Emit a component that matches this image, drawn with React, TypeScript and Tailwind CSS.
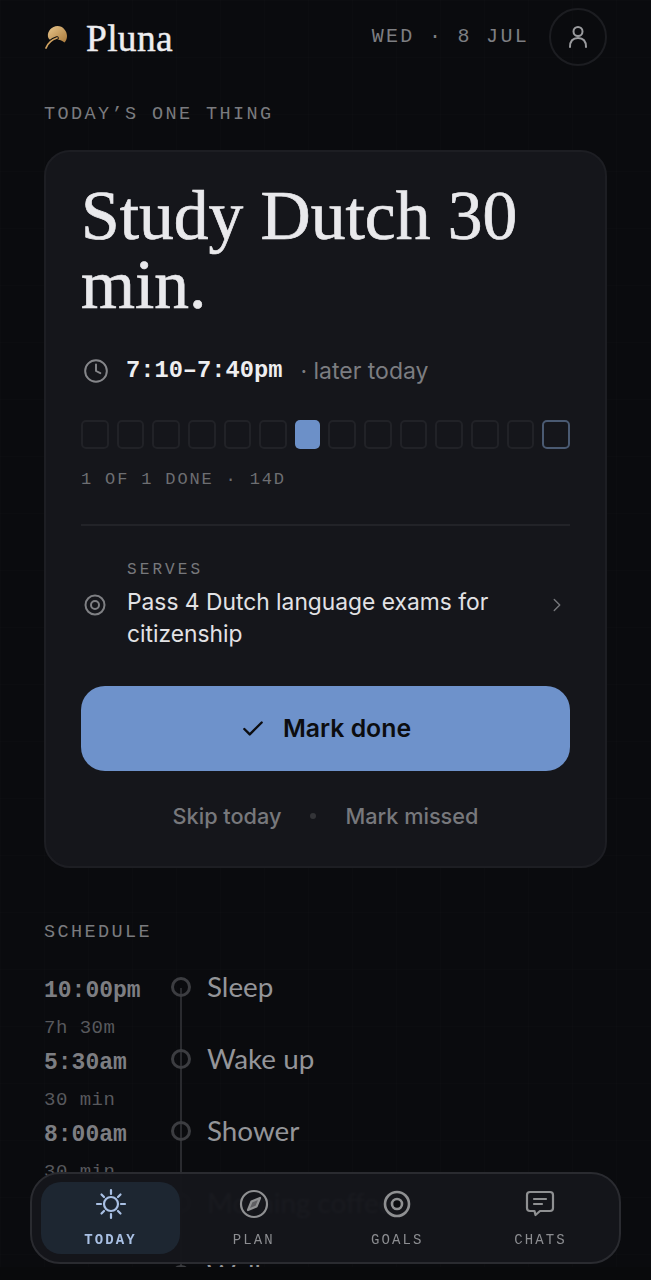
import React from 'react'
import { Check, ChevronRight, Clock } from 'lucide-react'

const sans = "font-['Lato',_'Noto_Sans',sans-serif]"
const inter = "font-['Inter',sans-serif]"
const mono = "font-['Liberation_Mono',monospace]"

const schedule = [
  { time: '10:00pm', dur: '7h 30m', name: 'Sleep' },
  { time: '5:30am', dur: '30 min', name: 'Wake up' },
  { time: '8:00am', dur: '30 min', name: 'Shower' },
  { time: '8:30am', dur: '30 min', name: 'Morning coffee' },
  { time: '9:00am', dur: '30 min', name: 'Walk' },
]

const SunIcon = () => (
  <svg width="32" height="32" viewBox="0 0 32 32" fill="none" stroke="#a9c0e4" strokeWidth="2.200" strokeLinecap="round">
    <circle cx="16" cy="16" r="7" />
    <path d="M16 2v4M16 26v4M2 16h4M26 16h4M6.500 6.500l2.500 2.500M23 23l2.500 2.500M6.500 25.500L9 23M23 9l2.500-2.500" />
  </svg>
)

const CompassIcon = () => (
  <svg width="30" height="30" viewBox="0 0 30 30" fill="none" stroke="#8f9092" strokeWidth="2.200">
    <circle cx="15" cy="15" r="13" />
    <path d="M21 9l-3.500 8.500L9 21l3.500-8.500z" fill="#8f9092" fillOpacity="0.6" strokeLinejoin="round" />
  </svg>
)

const SmallTarget = () => (
  <svg width="22" height="22" viewBox="0 0 22 22" fill="none" stroke="#7f8084" strokeWidth="2">
    <circle cx="11" cy="11" r="9.500" />
    <circle cx="11" cy="11" r="4" />
  </svg>
)

const NavTarget = () => (
  <svg width="28" height="28" viewBox="0 0 28 28" fill="none" stroke="#8f9092" strokeWidth="2.600">
    <circle cx="14" cy="14" r="12" />
    <circle cx="14" cy="14" r="5" fill="#0b0c0f" />
  </svg>
)

const ChatIcon = () => (
  <svg width="30" height="28" viewBox="0 0 30 28" fill="none" stroke="#8f9092" strokeWidth="2.200" strokeLinecap="round" strokeLinejoin="round">
    <path d="M5 2h20a3 3 0 0 1 3 3v13a3 3 0 0 1-3 3H15l-4.500 4-1-4H5a3 3 0 0 1-3-3V5a3 3 0 0 1 3-3z" />
    <path d="M9 9h12M9 14h8" />
  </svg>
)

const Logo = () => (
  <svg width="24" height="26" viewBox="0 0 24 26">
    <defs>
      <linearGradient id="leaf" x1="0" y1="0" x2="1" y2="1">
        <stop offset="0" stopColor="#e8c68c" />
        <stop offset="1" stopColor="#a9793a" />
      </linearGradient>
    </defs>
    <path d="M4 13C3 7 8 2 13.500 2S23 7 23 12c0 3-1 5-2.500 6.500C17 15 12 15 9 16c-2 .5-4 0-5-3z" fill="url(#leaf)" />
    <path d="M2 24c1.500-4 5-8 11-10" fill="none" stroke="#0a0b0e" strokeWidth="3.500" strokeLinecap="round" />
    <path d="M2 24c1.500-4 5-8 11-10" fill="none" stroke="#d0a260" strokeWidth="1.800" strokeLinecap="round" />
  </svg>
)

const NavItem = ({ icon, label, active }: { icon: React.ReactNode; label: string; active?: boolean }) => (
  <div
    className={`flex h-[72px] w-[139px] flex-col items-center justify-center rounded-[20px] ${
      active ? 'bg-[#1e2733]/95' : ''
    }`}
  >
    <div className="flex h-[32px] items-center justify-center">{icon}</div>
    <div
      className={`${mono} mt-[12px] text-[14px] leading-[16px] tracking-[2.100px] ${
        active ? 'font-bold text-[#a9c0e4]' : 'text-[#8c8d91]'
      }`}
    >
      {label}
    </div>
  </div>
)

const App = () => {
  const days = Array.from({ length: 14 }, (_, i) => i)

  return (
    <div
      className={`relative h-[1280px] w-[651px] overflow-hidden bg-[#0a0b0e] bg-[linear-gradient(rgba(255,255,255,0.008)_1px,transparent_1px),linear-gradient(90deg,rgba(255,255,255,0.008)_1px,transparent_1px)] bg-[size:44px_57px] ${sans}`}
    >
      <div className="px-[44px]">
        <header className="flex h-[72px] items-center justify-between pt-[1px]">
          <div className="flex items-center">
            <Logo />
            <span className="ml-[18px] mt-[4px] font-['Liberation_Serif',serif] text-[37.500px] leading-[40px] tracking-[0.3px] text-[#eeeef0] [-webkit-text-stroke:0.4px_#eeeef0]">
              Pluna
            </span>
          </div>
          <div className="flex items-center">
            <span className={`${mono} text-[20px] leading-[24px] tracking-[2.300px] text-[#7d7e82]`}>WED · 8 JUL</span>
            <div className="ml-[20px] flex h-[58px] w-[58px] items-center justify-center rounded-full border-2 border-[#1c1d21]">
              <svg width="20" height="24" viewBox="0 0 20 24" fill="none" stroke="#9a9b9e" strokeWidth="2" strokeLinecap="round">
                <circle cx="10" cy="6.500" r="4.500" />
                <path d="M2 22c0-6 3-9 8-9s8 3 8 9" />
              </svg>
            </div>
          </div>
        </header>

        <div className={`${mono} mt-[31px] text-[18.500px] leading-[24px] tracking-[2.400px] text-[#7a7b7f]`}>TODAY’S ONE THING</div>

        <section className="mt-[23px] h-[718px] rounded-[26px] border-2 border-[#1d1e23] bg-[#15161b] px-[35px] pt-[29px]">
          <h1 className="font-['Liberation_Serif',serif] text-[69.500px] leading-[69px] text-[#e9e9ec] [-webkit-text-stroke:0.7px_#e9e9ec]">
            Study Dutch 30 min.
          </h1>

          <div className="mt-[36px] flex h-[32px] items-center">
            <Clock size={26} strokeWidth={1.800} className="ml-[2px] text-[#85868a]" />
            <span className={`${mono} ml-[17px] text-[23.700px] font-bold text-[#eeeef0]`}>7:10–7:40pm</span>
            <span className={`${inter} ml-[18px] text-[23px] text-[#7c7d81]`}>· later today</span>
          </div>

          <div className="mt-[33px] flex gap-[8px]">
            {days.map((d) =>
              d === 6 ? (
                <div key={d} className="h-[29px] w-[25px] rounded-[5px] bg-[#6c90c8]" />
              ) : (
                <div key={d} className={`h-[29px] flex-1 rounded-[5px] border-2 ${d === 13 ? 'border-[#4a5a72]' : 'border-[#212227]'}`} />
              ),
            )}
          </div>

          <div className={`${mono} mt-[21px] text-[17px] leading-[20px] tracking-[1.850px] text-[#6d6e72]`}>1 OF 1 DONE · 14D</div>

          <div className="mt-[34px] border-t-2 border-[#222328]" />

          <div className="mt-[34px] flex items-center">
            <div className="ml-[3px]">
              <SmallTarget />
            </div>
            <div className="ml-[21px] flex-1">
              <div className={`${mono} text-[16px] leading-[20px] tracking-[3.100px] text-[#77787c]`}>SERVES</div>
              <div className={`${inter} mt-[6px] text-[22.800px] leading-[32px] text-[#e2e2e5]`}>
                Pass 4 Dutch language exams for
                <br />
                citizenship
              </div>
            </div>
            <ChevronRight size={22} strokeWidth={1.500} className="mr-[2px] text-[#77787c]" />
          </div>

          <button className={`${inter} mt-[36px] flex h-[85px] w-full items-center justify-center rounded-[24px] bg-[#6e92cb] text-[#0c0d10]`}>
            <Check size={26} strokeWidth={2.200} />
            <span className="ml-[17px] text-[24.800px] font-semibold">Mark done</span>
          </button>

          <div className={`${inter} mt-[29px] flex items-center justify-center text-[21.700px] font-medium text-[#77787c]`}>
            <span>Skip today</span>
            <span className="mx-[29px] h-[6px] w-[6px] rounded-full bg-[#333438]" />
            <span>Mark missed</span>
          </div>
        </section>

        <div className={`${mono} mt-[53px] text-[18.500px] leading-[24px] tracking-[2.400px] text-[#7a7b7f]`}>SCHEDULE</div>

        <div className="relative mt-[31px]">
          <div className="absolute bottom-0 left-[136px] top-[12px] w-[2px] bg-[#2a2b2f]" />
          {schedule.map((item) => (
            <div key={item.name} className="flex h-[72px]">
              <div className="w-[127px]">
                <div className={`${mono} text-[23px] leading-[30px] font-bold text-[#7d7e82]`}>{item.time}</div>
                <div className={`${mono} mt-[10px] text-[19px] leading-[24px] tracking-[0.500px] text-[#58595d]`}>{item.dur}</div>
              </div>
              <div className="relative mt-[1px] h-[20px] w-[20px] rounded-full border-[3px] border-[#3c3d41]" />
              <div className="-mt-[6px] ml-[16px] text-[27.800px] leading-[34px] text-[#949599]">{item.name}</div>
            </div>
          ))}
        </div>
      </div>

      <div className="absolute bottom-0 left-0 h-[13px] w-full bg-[#090a0c]" />

      <nav className="absolute left-[30px] top-[1172px] flex h-[92px] w-[591px] items-center justify-between rounded-[30px] border-2 border-[#2a2b30] bg-[#15161b]/[0.97] px-[9px] backdrop-blur-[1px]">
        <NavItem icon={<SunIcon />} label="TODAY" active />
        <NavItem icon={<CompassIcon />} label="PLAN" />
        <NavItem icon={<NavTarget />} label="GOALS" />
        <NavItem icon={<ChatIcon />} label="CHATS" />
      </nav>
    </div>
  )
}

export default App
